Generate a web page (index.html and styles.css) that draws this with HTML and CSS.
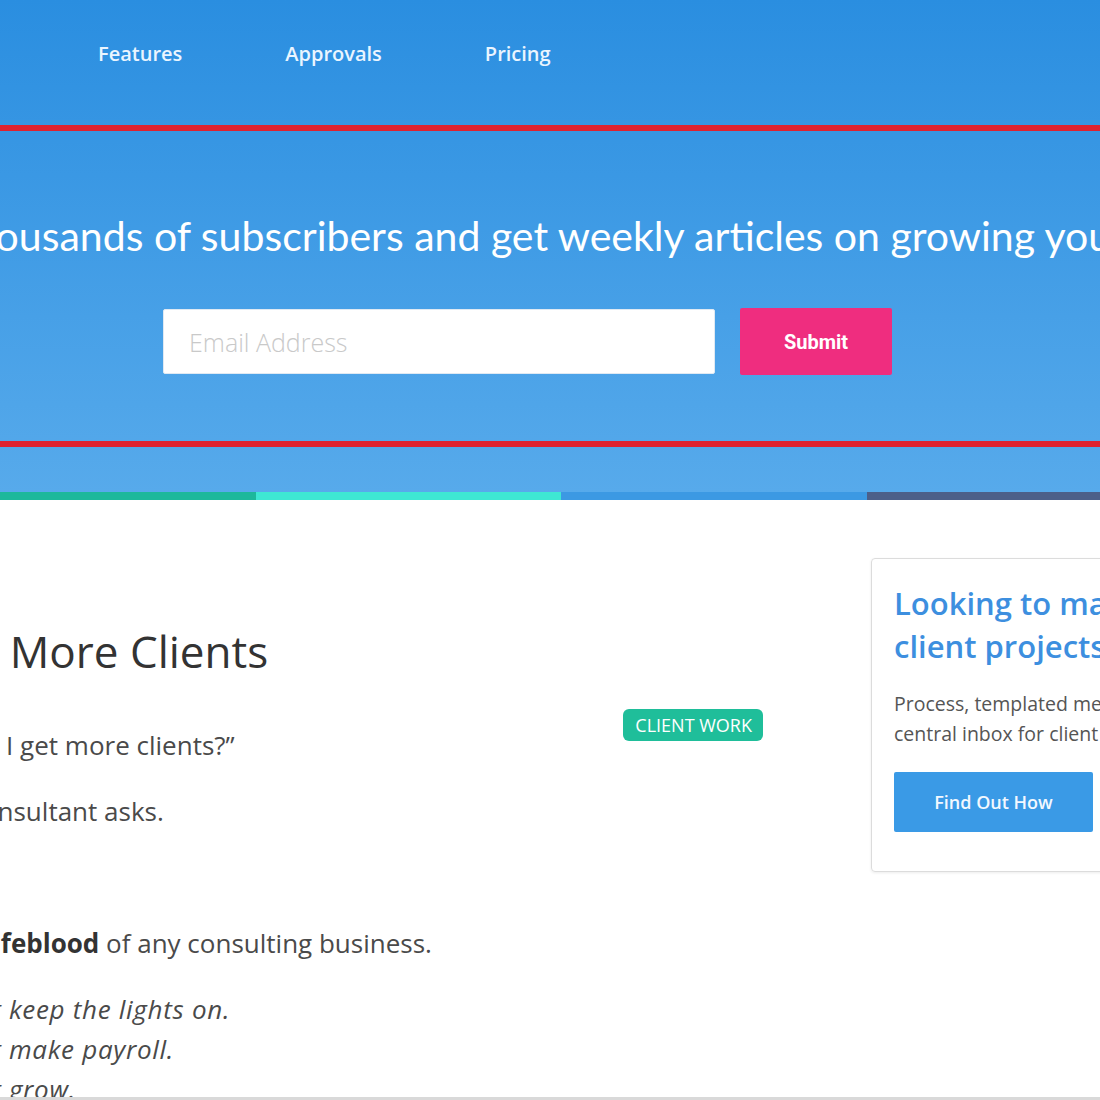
FILE: index.html
```html
<!DOCTYPE html>
<html lang="en">
<head>
    <meta charset="UTF-8">
    <meta name="viewport" content="width=device-width, initial-scale=1.0">
    <title>Land More Clients</title>
    <link rel="stylesheet" href="styles.css">
</head>
<body>
<div class="page">

    <header class="hero">
        <nav class="nav">
            <a href="#">Features</a>
            <a href="#">Approvals</a>
            <a href="#">Pricing</a>
        </nav>

        <section class="subscribe">
            <h2>Join thousands of subscribers and get weekly articles on growing your business</h2>
            <form class="subscribe-form" onsubmit="return false">
                <input type="email" placeholder="Email Address">
                <button type="submit">Submit</button>
            </form>
        </section>
    </header>

    <div class="strip">
        <span class="s1"></span>
        <span class="s2"></span>
        <span class="s3"></span>
        <span class="s4"></span>
    </div>

    <main class="content">
        <article class="post">
            <h1>Land More Clients</h1>
            <div class="tags"><span class="badge">CLIENT WORK</span></div>
            <p>&ldquo;How do I get more clients?&rdquo;</p>
            <p>Every consultant asks.</p>
            <p>&nbsp;</p>
            <p>It's the <strong>lifeblood</strong> of any consulting business.</p>
            <p class="lines">
                <em>You can't keep the lights on.</em><br>
                <em>You can't make payroll.</em><br>
                <em>You can't grow.</em>
            </p>
        </article>

        <aside class="sidebar">
            <div class="card">
                <h3>Looking to manage your<br>client projects better?</h3>
                <p>Process, templated messages and a<br>central inbox for client communication.</p>
                <a class="btn" href="#">Find Out How</a>
            </div>
        </aside>
    </main>

</div>
</body>
</html>
```

FILE: styles.css
```css
body {
    margin: 0;
    font-family: "Open Sans", Arial, sans-serif;
    color: #4a4a4a;
    background: #fff;
}
.page {
    width: 1100px;
    height: 1100px;
    overflow: hidden;
    box-sizing: border-box;
    border-bottom: 3px solid #d9d9d9;
}

/* hero */
.hero {
    height: 492px;
    background: linear-gradient(180deg, #2a8ee0 0%, #57aaeb 100%);
}
.nav {
    display: flex;
    gap: 103px;
    height: 125px;
    box-sizing: border-box;
    padding: 41px 0 0 98px;
}
.nav a {
    color: #eaf5ff;
    text-decoration: none;
    font-weight: 600;
    font-size: 20px;
    line-height: 26px;
}
.subscribe {
    border-top: 6px solid #de2230;
    border-bottom: 6px solid #de2230;
    height: 310px;
}
.subscribe h2 {
    margin: 80px 0 0 -125px;
    white-space: nowrap;
    font-family: Lato, "Open Sans", sans-serif;
    font-weight: 400;
    font-size: 41px;
    line-height: 50px;
    color: #fff;
}
.subscribe-form {
    display: flex;
    gap: 25px;
    margin: 48px 0 0 163px;
}
.subscribe-form input {
    width: 552px;
    height: 65px;
    box-sizing: border-box;
    border: 1px solid #dfe9f3;
    border-radius: 2px;
    padding: 0 25px;
    font-family: "Open Sans", sans-serif;
    font-weight: 300;
    font-size: 25px;
}
.subscribe-form input::placeholder {
    color: #c9c9c9;
}
.subscribe-form button {
    width: 152px;
    height: 67px;
    margin-top: -1px;
    border: 0;
    border-radius: 2px;
    background: #ef2d7f;
    color: #fff;
    font-family: Roboto, sans-serif;
    font-weight: 700;
    font-size: 20px;
}

.strip {
    display: flex;
    height: 8px;
}
.strip span { display: block; }
.s1 { width: 256px; background: #1db89b; }
.s2 { width: 305px; background: #3ee7d3; }
.s3 { width: 306px; background: #3c99e3; }
.s4 { flex: 1; background: #4c5f89; }

/* article */
.content {
    display: flex;
}
.post {
    width: 866px;
    flex-shrink: 0;
    margin-left: -103px;
    padding-top: 123px;
    font-size: 26px;
}
.post h1 {
    margin: 0 0 46px;
    font-weight: 400;
    font-size: 44px;
    line-height: 56px;
    color: #333;
}
.tags {
    float: right;
    margin-top: -21px;
}
.badge {
    display: inline-block;
    background: #1fbe9a;
    color: #fff;
    font-size: 18px;
    line-height: 32px;
    padding: 0 11px 0 12px;
    border-radius: 6px;
}
.post p {
    margin: 0 0 26px;
    line-height: 40px;
}
.post strong {
    color: #333;
}
.post .lines {
    margin-left: -7px;
}
.lines em {
    letter-spacing: 0.7px;
}

/* sidebar */
.sidebar {
    margin-left: 108px;
    padding-top: 58px;
}
.card {
    width: 440px;
    border: 1px solid #dcdcdc;
    border-radius: 4px;
    box-shadow: 0 1px 3px rgba(0, 0, 0, 0.08);
    padding: 23px 22px 39px;
}
.card h3 {
    margin: 0;
    font-weight: 600;
    font-size: 31px;
    line-height: 43px;
    color: #3d8fdf;
    white-space: nowrap;
}
.card p {
    margin: 21px 0 23px;
    font-size: 19.5px;
    line-height: 30px;
    color: #555;
    white-space: nowrap;
}
.btn {
    display: inline-block;
    width: 199px;
    line-height: 60px;
    text-align: center;
    background: #3a9ae6;
    color: #f2f8ff;
    font-weight: 600;
    font-size: 18px;
    text-decoration: none;
    border-radius: 2px;
}
```
